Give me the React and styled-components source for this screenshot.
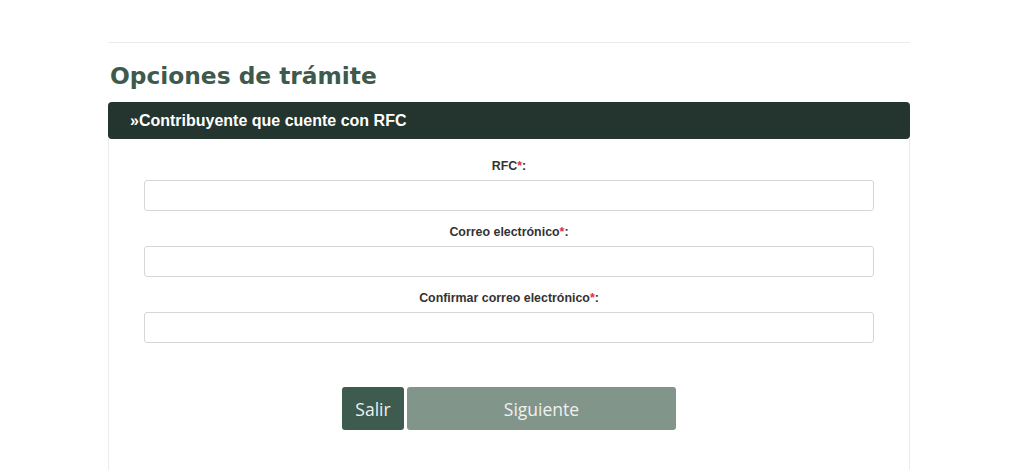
import React from 'react';
import styled, { createGlobalStyle } from 'styled-components';

const Global = createGlobalStyle`
  html, body { margin: 0; padding: 0; background: #fff; }
  body { font-family: "Liberation Sans", Arial, sans-serif; }
`;

const Page = styled.div`
  width: 802px; margin-left: 108px; padding-top: 42px;
`;
const Rule = styled.hr`
  margin: 0; border: none; border-top: 1px solid #ebebeb;
`;
const Title = styled.h2`
  margin: 18px 0 0 2px; font-family: "DejaVu Sans", sans-serif; font-weight: 700;
  font-size: 23.3px; line-height: 30px; color: #3d5a4c;
`;
const PanelHead = styled.div`
  margin-top: 11px; height: 37px; background: #24342e; border-radius: 4px;
  display: flex; align-items: center; padding-left: 22px;
  color: #fff; font-weight: 700; font-size: 16px;
`;
const PanelBody = styled.div`
  border: 1px solid #ececec; border-top: none; height: 340px;
  padding: 20px 35px 0 35px;
`;
const Field = styled.div`
  display: flex; flex-direction: column; align-items: center; margin-bottom: 14px;
`;
const Label = styled.label`
  font-size: 12.4px; font-weight: 700; color: #333; line-height: 14px; margin-bottom: 7px;
`;
const Req = styled.span` color: #e0313a; `;
const Input = styled.input`
  box-sizing: border-box; width: 100%; height: 31px;
  border: 1px solid #d6d6d6; border-radius: 3px; background: #fff;
`;
const Actions = styled.div`
  display: flex; justify-content: center; gap: 3px; margin-top: 44px;
`;
const Btn = styled.button`
  height: 43px; border: none; border-radius: 3px; cursor: pointer;
  font-family: "Open Sans", sans-serif; font-size: 17.5px; color: #eef1ef;
  width: ${p => p.$w}px; background: ${p => p.$bg};
`;

const fields = ['RFC', 'Correo electrónico', 'Confirmar correo electrónico'];

export default function App() {
  return (
    <Page>
      <Global />
      <Rule />
      <Title>Opciones de trámite</Title>
      <PanelHead>»Contribuyente que cuente con RFC</PanelHead>
      <PanelBody>
        {fields.map(f => (
          <Field key={f}>
            <Label>{f}<Req>*</Req>:</Label>
            <Input type="text" />
          </Field>
        ))}
        <Actions>
          <Btn $w={62} $bg="#3d5b4f">Salir</Btn>
          <Btn $w={269} $bg="#82958a">Siguiente</Btn>
        </Actions>
      </PanelBody>
    </Page>
  );
}
